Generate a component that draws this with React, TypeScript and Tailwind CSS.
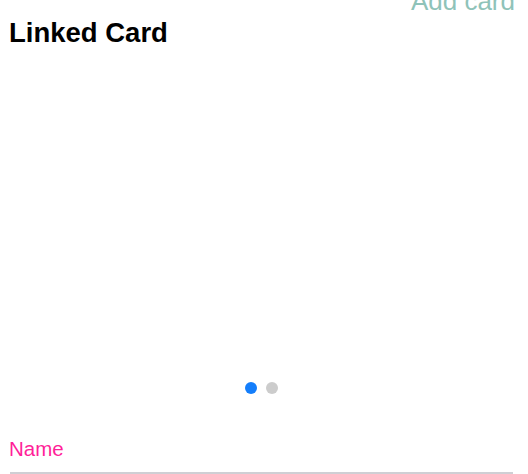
export default function App() {
  return (
    <div className="w-[528px] h-[474px] overflow-hidden bg-white font-['Liberation_Sans',_Arial,_sans-serif]">
      <div className="flex justify-end pr-[13px] mt-[-12px] h-[26px]">
        <span className="text-[26px] leading-[26px] text-[#8fc3b9]">Add card</span>
      </div>
      <h1 className="mt-[5px] pl-[9px] text-[27.5px] leading-[28px] font-bold text-black">Linked Card</h1>
      <div className="h-[335px]" />
      <div className="flex justify-center gap-[9px] pr-[5px]">
        <span className="w-3 h-3 rounded-full bg-[#147efb]" />
        <span className="w-3 h-3 rounded-full bg-[#cccccc]" />
      </div>
      <div className="mt-[45px] pl-[9px] text-[20.5px] leading-[20px] text-[#ff1f99]">Name</div>
      <div className="mt-[13px] mx-[10px] mr-[15px] h-[2px] bg-[#cfcfd4]" />
    </div>
  );
}
